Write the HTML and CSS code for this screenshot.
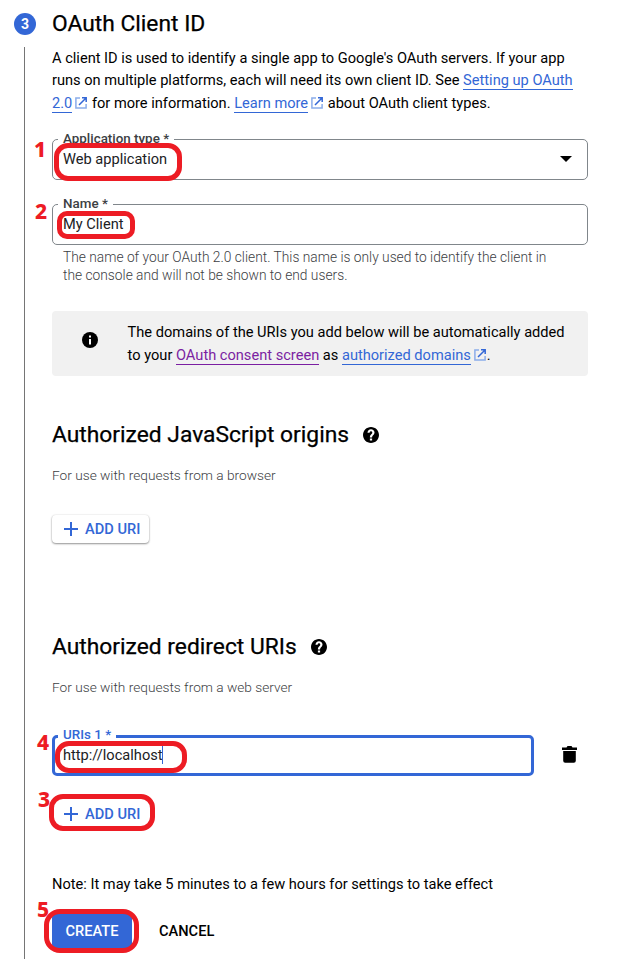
FILE: index.html
```
<!DOCTYPE html>
<html lang="en">
<head>
<meta charset="utf-8">
<title>OAuth Client ID</title>
<link rel="stylesheet" href="styles.css">
</head>
<body>
<svg class="defs" width="0" height="0" aria-hidden="true">
  <symbol id="ext" viewBox="0 0 12 12"><path d="M5 .9H.9v10.2h10.2V7" fill="none" stroke="#8badea" stroke-width="1.5"/><path d="M7 .8h4.2V5M11 1 4 8" fill="none" stroke="#3367d6" stroke-width="1.5"/></symbol>
  <symbol id="plus" viewBox="0 0 14 14"><path d="M7 0v14M0 7h14" stroke="#3367d6" stroke-width="2"/></symbol>
  <symbol id="help" viewBox="2 2 20 20"><path d="M12 2C6.48 2 2 6.48 2 12s4.480 10 10 10 10-4.480 10-10S17.520 2 12 2zm1.400 17h-2.800v-2.600h2.800V19zm2.100-7.700-.9.900c-.8.800-1.200 1.400-1.200 2.900h-2.800v-.6c0-1.100.4-2.100 1.200-2.900l1.200-1.200c.4-.3.600-.8.600-1.400 0-1-.7-1.700-1.600-1.700s-1.700.7-1.700 1.800H7.600C7.600 6.600 9.600 4.700 12 4.700s4.400 1.900 4.400 4.300c0 .9-.4 1.700-.9 2.300z"/></symbol>
</svg>
<main class="step">
  <div class="rail"><span class="badge">3</span><span class="line"></span></div>
  <div class="content">
    <h1>OAuth Client ID</h1>
    <p class="intro">A client ID is used to identify a single app to Google's OAuth servers. If your app<br>runs on multiple platforms, each will need its own client ID. See <a>Setting up OAuth</a><br><a>2.0</a><svg class="ext"><use href="#ext"/></svg> for more information. <a>Learn more</a><svg class="ext"><use href="#ext"/></svg> about OAuth client types.</p>

    <div class="field type">
      <span class="label">Application type *</span>
      <span class="value">Web application</span>
      <svg class="caret" width="12" height="6" viewBox="0 0 12 6"><path d="M0 0h12L6 6z"/></svg>
      <i class="ring r1"></i><b class="num n1">1</b>
    </div>
    <div class="field name">
      <span class="label">Name *</span>
      <span class="value">My Client</span>
      <i class="ring r2"></i><b class="num n2">2</b>
    </div>
    <p class="hint">The name of your OAuth 2.0 client. This name is only used to identify the client in<br>the console and will not be shown to end users.</p>

    <div class="notice">
      <svg width="16" height="16" viewBox="0 0 16 16"><circle cx="8" cy="8" r="8"/><path d="M7 3.500h2v2H7zM7 7h2v5.500H7z" fill="#fff"/></svg>
      <p>The domains of the URIs you add below will be automatically added<br>to your <a class="visited">OAuth consent screen</a> as <a>authorized domains</a><svg class="ext"><use href="#ext"/></svg>.</p>
    </div>

    <h2>Authorized JavaScript origins <svg class="help"><use href="#help"/></svg></h2>
    <p class="sub">For use with requests from a browser</p>
    <div class="add"><svg class="plus"><use href="#plus"/></svg>ADD URI</div>

    <h2 class="redirect">Authorized redirect URIs <svg class="help"><use href="#help"/></svg></h2>
    <p class="sub">For use with requests from a web server</p>
    <div class="urirow">
      <div class="field focus">
        <span class="label">URIs 1 *</span>
        <span class="value">http://localhost</span><span class="cursor"></span>
        <i class="ring r4"></i><b class="num n4">4</b>
      </div>
      <svg class="trash" width="15" height="17" viewBox="0 0 15 17"><path d="M0 1.500h4.500L5.500 0h4l1 1.500H15V4H0zM1.200 5h12.600v9.800a2 2 0 0 1-2 2H3.200a2 2 0 0 1-2-2z"/></svg>
    </div>
    <div class="add second"><svg class="plus"><use href="#plus"/></svg>ADD URI<i class="ring r3"></i><b class="num n3">3</b></div>

    <p class="note">Note: It may take 5 minutes to a few hours for settings to take effect</p>
    <div class="actions">
      <div class="create">CREATE<i class="ring r5"></i><b class="num n5">5</b></div>
      <div class="cancel">CANCEL</div>
    </div>
  </div>
</main>
</body>
</html>
```
FILE: styles.css
```
* { box-sizing: border-box; }
body { margin: 0; background: #fff; color: #000; font-family: Roboto, sans-serif; font-size: 14.61px; overflow: hidden; }
h1, h2, p { margin: 0; white-space: nowrap; }
.defs { position: absolute; }
.step { display: flex; height: 959px; }
.rail { width: 52px; flex: none; display: flex; flex-direction: column; padding-top: 13px; }
.badge { width: 22px; height: 22px; margin-left: 14px; border-radius: 50%; background: #3367d6; color: #fff; font-size: 14px; font-weight: 700; line-height: 22px; text-align: center; }
.line { width: 1px; flex: 1; margin: 12px 0 0 24px; background: #757575; }
.content { width: 536px; flex: none; }
h1, h2 { font-size: 22.8px; font-weight: 400; -webkit-text-stroke: .25px #000; }
h1 { height: 46.5px; line-height: 47px; }
.intro { line-height: 22.5px; }
a { color: #3367d6; border-bottom: 1px solid #3367d6; }
a.visited { color: #7b1fa2; border-color: #7b1fa2; }
.ext { width: 12px; height: 12px; margin: 0 1px 0 3px; vertical-align: -1px; }
.field { position: relative; height: 41px; border: 1px solid #80868b; border-radius: 5px; display: flex; align-items: center; padding: 0 15px 1px 10px; color: #202124; }
.type { margin-top: 25px; }
.name { margin-top: 24px; }
.label { position: absolute; left: 5px; top: -9px; padding: 0 5px; background: #fff; font-size: 13.4px; font-weight: 500; line-height: 16px; color: #3c4043; }
.caret { margin-left: auto; }
.ring { position: absolute; border: 5px solid #ed1c24; border-radius: 14px; }
.num { position: absolute; color: #ed1c24; font: 800 21px/24px "Noto Sans", sans-serif; }
.hint { margin: 3px 0 0 11px; font-size: 13.77px; font-weight: 300; line-height: 18px; color: #3c4043; }
.notice { height: 65px; margin-top: 27px; border-radius: 4px; background: #f1f1f1; display: flex; padding: 10px 0 0 30px; line-height: 23px; }
.notice svg:first-child { margin: 11px 30px 0 0; flex: none; }
.notice p { margin-left: -.4px; }
h2 { height: 30px; margin-top: 43px; line-height: 30px; display: flex; align-items: center; padding-top: 1px; }
.help { width: 16px; height: 16px; margin: 1px 0 0 14px; }
.sub { margin-top: 17px; font-size: 13.7px; font-weight: 300; line-height: 18px; color: #3c4043; }
.add { position: relative; width: 97px; height: 28px; margin-top: 31px; border-radius: 4px; padding-left: 12px; display: flex; align-items: center; color: #3367d6; font-weight: 500; box-shadow: 0 1px 2px rgba(0,0,0,.4), 0 0 2px rgba(0,0,0,.12); white-space: nowrap; }
.plus { width: 14px; height: 14px; margin-right: 7px; }
.redirect { margin-top: 88px; }
.urirow { display: flex; align-items: center; margin-top: 39px; }
.focus { width: 482px; border: 3px solid #3367d6; padding: 0 8px 1px; }
.focus .label { color: #3367d6; left: 3px; top: -11px; }
.cursor { width: 1px; height: 18px; margin-left: -1px; background: #3367d6; }
.trash { margin: -2px 0 0 28px; }
.second { box-shadow: none; margin-top: 24px; }
.note { margin-top: 45px; line-height: 22px; }
.actions { display: flex; align-items: center; margin-top: 19px; font-weight: 500; }
.create { position: relative; width: 80px; height: 34px; background: #3367d6; color: #fff; text-align: center; line-height: 35px; border-radius: 4px; }
.cancel { margin-left: 27px; }
.r1 { left: 1px; top: 3px; width: 128px; height: 38px; }
.r2 { left: 4px; top: 6px; width: 78px; height: 28px; border-radius: 10px; }
.r4 { left: 0; top: 3px; width: 132px; height: 32px; }
.r3 { left: -3px; top: -6px; width: 106px; height: 37px; }
.r5 { left: -8px; top: -5px; width: 95px; height: 44px; border-radius: 16px; }
.n1 { left: -19px; top: -3px; }
.n2 { left: -18px; top: -6px; }
.n4 { left: -18px; top: -8px; }
.n3 { left: -14px; top: -13px; }
.n5 { left: -15px; top: -17px; }
```
